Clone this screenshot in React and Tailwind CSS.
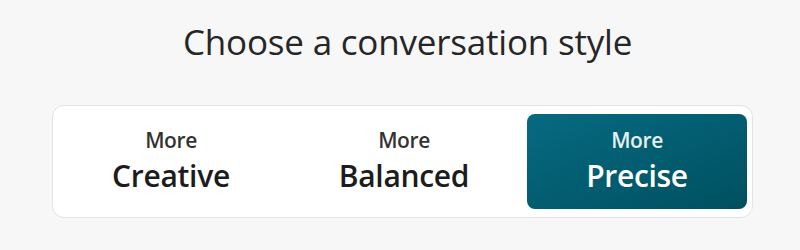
import React, { useState } from "react";

const styles = [
  { id: "creative", label: "Creative" },
  { id: "balanced", label: "Balanced" },
  { id: "precise", label: "Precise" },
];

export default function App() {
  const [selected, setSelected] = useState("precise");

  return (
    <div
      className="w-[800px] h-[250px] bg-[#f7f7f7] flex flex-col items-start"
      style={{ fontFamily: '"Open Sans", "Noto Sans", sans-serif' }}
    >
      <h1 className="ml-[183px] mt-[18px] text-[35px] leading-[48px] font-normal text-[#262626] tracking-[-0.2px]">
        Choose a conversation style
      </h1>

      {/* Style switcher */}
      <div className="ml-[52px] mt-[39px] w-[701px] h-[113px] bg-white border border-[#e3e3e3] rounded-[12px] pl-2 pr-[5px] py-2 flex gap-[13px]">
        {styles.map((s) => {
          const active = selected === s.id;
          return (
            <button
              key={s.id}
              onClick={() => setSelected(s.id)}
              className={`w-[220px] h-[95px] rounded-[8px] flex flex-col items-center pt-[15px] gap-2 ${
                active
                  ? "bg-gradient-to-br from-[#076a82] to-[#00505f] text-white"
                  : "bg-white text-[#1c1c1c]"
              }`}
            >
              <span className="text-[21px] leading-[23px] font-semibold tracking-[-0.4px] opacity-90">
                More
              </span>
              <span className="text-[30px] leading-[32px] font-semibold tracking-[-0.3px]">
                {s.label}
              </span>
            </button>
          );
        })}
      </div>
    </div>
  );
}
